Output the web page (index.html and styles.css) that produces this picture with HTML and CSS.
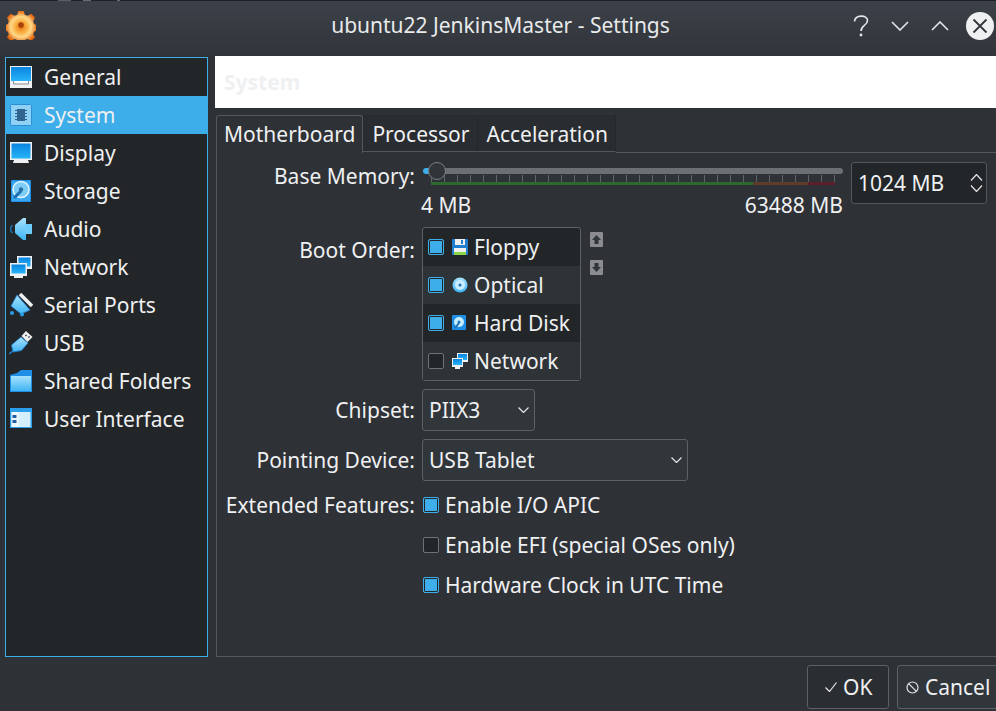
FILE: index.html
```html
<!DOCTYPE html>
<html lang="en">
<head>
    <meta charset="UTF-8">
    <meta name="viewport" content="width=device-width, initial-scale=1.0">
    <title>ubuntu22 JenkinsMaster - Settings</title>
    <link rel="stylesheet" href="styles.css">
</head>
<body>
    <svg class="defs" width="0" height="0">
        <defs>
            <linearGradient id="screen" x1="0" y1="0" x2="0" y2="1">
                <stop offset="0" stop-color="#0a84e0"/>
                <stop offset="1" stop-color="#27b4f8"/>
            </linearGradient>
            <linearGradient id="light" x1="0" y1="0" x2="0" y2="1">
                <stop offset="0" stop-color="#a8e2fd"/>
                <stop offset="1" stop-color="#3fb4f4"/>
            </linearGradient>
            <radialGradient id="gear" cx="0.5" cy="0.5" r="0.5">
                <stop offset="0" stop-color="#e8720c"/>
                <stop offset="0.4" stop-color="#fbb54a"/>
                <stop offset="0.65" stop-color="#fdd98a"/>
                <stop offset="1" stop-color="#e2650e"/>
            </radialGradient>
        </defs>
    </svg>

    <header class="titlebar">
        <svg class="app-icon" width="30" height="30" viewBox="0 0 32 32">
            <path fill="url(#gear)" d="M13 1h6l1 4 3 1 4-2 4 4-2 4 1 3 3 1v6l-3 1-1 3 2 3-4 4-4-2-3 1-1 3h-6l-1-3-3-1-4 2-4-4 2-3-1-3-3-1v-6l3-1 1-3-2-4 4-4 4 2 3-1z"/>
            <circle cx="16" cy="16" r="3" fill="#a8400c"/>
        </svg>
        <div class="title">ubuntu22 JenkinsMaster - Settings</div>
        <div class="win-buttons">
            <svg width="16" height="22" viewBox="0 0 16 22"><path class="win-stroke" d="M1.500 6.500C2 -0.500 14.500 -0.500 14.500 5.500c0 5-6.500 5-6.500 10.500"/><circle cx="8" cy="20" r="1.400" fill="#e4e6e8"/></svg>
            <svg width="18" height="10" viewBox="0 0 18 10"><path class="win-stroke" d="M1 1l8 8 8-8"/></svg>
            <svg width="18" height="10" viewBox="0 0 18 10"><path class="win-stroke" d="M1 9l8-8 8 8"/></svg>
            <svg class="win-close" width="28" height="28" viewBox="0 0 28 28"><circle cx="14" cy="14" r="14" fill="#eff0f1"/><path d="M7.500 7.500l13 13M20.500 7.500l-13 13" stroke="#31363b" stroke-width="1.800" fill="none"/></svg>
        </div>
    </header>

    <div class="main">
        <nav class="sidebar">
            <div class="nav-item">
                <svg width="24" height="24" viewBox="0 0 24 24"><rect x="1" y="1" width="22" height="22" fill="#eff0f1"/><rect x="2" y="2" width="20" height="14" fill="url(#screen)"/><path d="M5 16h14v3H5z" fill="#f7f7f7"/><path d="M4.500 16v3h15v-3" stroke="#8a8d90" fill="none"/></svg>
                General
            </div>
            <div class="nav-item selected">
                <svg width="24" height="24" viewBox="0 0 24 24"><rect x="1.500" y="1.500" width="21" height="21" rx="1" fill="#8fd0f5" stroke="#2a8ed8"/><rect x="8" y="6" width="8" height="12" fill="#31658f"/><path d="M6 7.500h12M6 10.500h12M6 13.500h12M6 16.500h12" stroke="#31658f" stroke-dasharray="2 8"/></svg>
                System
            </div>
            <div class="nav-item">
                <svg width="24" height="24" viewBox="0 0 24 24"><rect x="1" y="1" width="22" height="18" fill="#eff0f1"/><rect x="2.500" y="2.500" width="19" height="15" fill="url(#screen)"/><path d="M5 19h14l1 3H4z" fill="#eff0f1"/></svg>
                Display
            </div>
            <div class="nav-item">
                <svg width="24" height="24" viewBox="0 0 24 24"><rect x="2" y="1" width="20" height="22" rx="1" fill="#1f8ee6"/><rect x="3" y="2" width="18" height="20" fill="#39a6f0"/><circle cx="12" cy="10.500" r="8" fill="#7ccdf8" stroke="#e4f6fe" stroke-width="1.500"/><circle cx="12" cy="10.500" r="2.200" fill="#2a6ea8"/><path d="M12 12l-7 7" stroke="#1f6fb0" stroke-width="3"/></svg>
                Storage
            </div>
            <div class="nav-item">
                <svg width="24" height="24" viewBox="0 0 24 24"><path d="M6 8l8-7h3v22h-3l-8-7z" fill="url(#light)"/><rect x="16" y="7" width="7" height="10" fill="#6fcbfa"/><path d="M3.500 8c-2.500 2-2.500 6 0 8" stroke="#1f6fb0" fill="none" stroke-width="1.500"/></svg>
                Audio
            </div>
            <div class="nav-item">
                <svg width="24" height="24" viewBox="0 0 24 24"><rect x="8" y="1" width="15" height="13" fill="#eff0f1"/><rect x="9.500" y="2.500" width="12" height="9" fill="url(#screen)"/><rect x="1" y="8" width="17" height="13" fill="#eff0f1"/><rect x="2.500" y="9.500" width="14" height="9" fill="url(#screen)"/><path d="M5 21h9v2H5z" fill="#eff0f1"/></svg>
                Network
            </div>
            <div class="nav-item">
                <svg width="24" height="24" viewBox="0 0 24 24"><path d="M8 2l13 15-9 4-10-8z" fill="url(#light)" stroke="#1f7ed0" stroke-width=".8"/><path d="M11 1l12 12" stroke="#eff0f1" stroke-width="3.500"/><circle cx="3" cy="20" r="2" fill="#2a9ee8"/><circle cx="13" cy="21.500" r="2" fill="#2a9ee8"/></svg>
                Serial Ports
            </div>
            <div class="nav-item">
                <svg width="24" height="24" viewBox="0 0 24 24"><path d="M12 6l7 6-6.500 7.500-8.500 1.500-1.500-7z" fill="url(#light)" stroke="#1f7ed0" stroke-width=".8"/><path d="M4 20l-4 3" stroke="#1f7ed0" stroke-width="1.500"/><path d="M17 0l6.500 6-5 5-6-6z" fill="#eff0f1"/><path d="M16.500 4l1 1M19.500 5.500l1 1" stroke="#31363b" stroke-width="1.500"/></svg>
                USB
            </div>
            <div class="nav-item">
                <svg width="24" height="24" viewBox="0 0 24 24"><path d="M1 6l7-2 4-3h11v22H1z" fill="#1f8ee6"/><path d="M2 7h20v15H2z" fill="url(#light)"/></svg>
                Shared Folders
            </div>
            <div class="nav-item">
                <svg width="24" height="24" viewBox="0 0 24 24"><rect x="1" y="1" width="22" height="20" fill="#2a9ee8"/><rect x="2.500" y="5" width="19" height="15" fill="#d4f0fd"/><rect x="2.500" y="5" width="7" height="15" fill="#f2f8fc"/><path d="M3.500 8h4v3h-4zM3.500 13h4v3h-4z" fill="#1f5fa8"/></svg>
                User Interface
            </div>
        </nav>

        <section class="content">
            <h2 class="page-title">System</h2>
            <div class="tabs">
                <div class="tab active">Motherboard</div>
                <div class="tab">Processor</div>
                <div class="tab">Acceleration</div>
            </div>
            <div class="panel">
                <div class="row row-memory">
                    <div class="label">Base Memory:</div>
                    <div class="slider">
                        <div class="track">
                            <span class="track-fill"></span>
                            <span class="handle"></span>
                        </div>
                        <div class="ticks"></div>
                        <div class="scale"></div>
                        <div class="slider-labels"><span>4 MB</span><span>63488 MB</span></div>
                    </div>
                    <div class="spinbox">
                        1024 MB
                        <svg width="13" height="18" viewBox="0 0 13 18"><path class="chev" d="M1 6.500l5.500-6 5.500 6M1 11.500l5.500 6 5.500-6"/></svg>
                    </div>
                </div>

                <div class="row row-boot">
                    <div class="label">Boot Order:</div>
                    <div class="boot-list">
                        <div class="boot-item">
                            <span class="check on"></span>
                            <svg width="16" height="16" viewBox="0 0 16 16"><rect width="16" height="16" rx="1" fill="#1f7ed0"/><rect x="3" y="0" width="10" height="6" fill="#eff0f1"/><rect x="9" y="1" width="2" height="4" fill="#1f7ed0"/><rect x="2" y="9" width="12" height="7" fill="#eff0f1"/><rect x="2" y="13" width="12" height="3" fill="#8bd44a"/></svg>
                            Floppy
                        </div>
                        <div class="boot-item alt">
                            <span class="check on"></span>
                            <svg width="16" height="16" viewBox="0 0 16 16"><circle cx="8" cy="8" r="7.500" fill="url(#light)"/><circle cx="8" cy="8" r="5" fill="#c8eefd"/><circle cx="8" cy="8" r="1.500" fill="#1f6fb0"/></svg>
                            Optical
                        </div>
                        <div class="boot-item">
                            <span class="check on"></span>
                            <svg width="16" height="16" viewBox="0 0 16 16"><rect width="14" height="15" rx="1" fill="#1f8ee6"/><circle cx="7" cy="7" r="5" fill="#c8eefd"/><circle cx="7" cy="7" r="1.500" fill="#2178bc"/><path d="M7 8l-4 5" stroke="#1f6fb0" stroke-width="2"/></svg>
                            Hard Disk
                        </div>
                        <div class="boot-item alt">
                            <span class="check"></span>
                            <svg width="16" height="16" viewBox="0 0 16 16"><rect x="5" y="0" width="11" height="9" fill="#eff0f1"/><rect x="6" y="1" width="9" height="6" fill="url(#screen)"/><rect x="0" y="5" width="11" height="9" fill="#eff0f1"/><rect x="1" y="6" width="9" height="6" fill="url(#screen)"/><path d="M3 14h5v2H3z" fill="#eff0f1"/></svg>
                            Network
                        </div>
                    </div>
                    <div class="order-buttons">
                        <span class="order-btn"><svg width="9" height="9" viewBox="0 0 9 9"><path d="M4.500 0L9 5H6.500v4h-4V5H0z" fill="#31363b"/></svg></span>
                        <span class="order-btn"><svg width="9" height="9" viewBox="0 0 9 9"><path d="M4.500 9L9 4H6.500V0h-4v4H0z" fill="#31363b"/></svg></span>
                    </div>
                </div>

                <div class="row row-combo">
                    <div class="label">Chipset:</div>
                    <div class="combo combo-small">PIIX3<svg width="11" height="6" viewBox="0 0 11 6"><path class="chev" d="M.5.500l5 5 5-5"/></svg></div>
                </div>
                <div class="row row-combo">
                    <div class="label">Pointing Device:</div>
                    <div class="combo combo-wide">USB Tablet<svg width="11" height="6" viewBox="0 0 11 6"><path class="chev" d="M.5.500l5 5 5-5"/></svg></div>
                </div>

                <div class="row row-feature">
                    <div class="label">Extended Features:</div>
                    <div class="feature"><span class="check on"></span>Enable I/O APIC</div>
                </div>
                <div class="row row-feature">
                    <div class="label"></div>
                    <div class="feature"><span class="check"></span>Enable EFI (special OSes only)</div>
                </div>
                <div class="row row-feature">
                    <div class="label"></div>
                    <div class="feature"><span class="check on"></span>Hardware Clock in UTC Time</div>
                </div>
            </div>
        </section>
    </div>

    <footer class="footer">
        <div class="btn default"><svg width="12" height="10" viewBox="0 0 12 10"><path class="chev" d="M.5 5.500l4 4 7-9"/></svg>OK</div>
        <div class="btn"><svg width="13" height="13" viewBox="0 0 13 13"><circle cx="6.500" cy="6.500" r="5.500" class="chev"/><path class="chev" d="M2.600 2.600l7.800 7.800"/></svg>Cancel</div>
    </footer>
</body>
</html>
```

FILE: styles.css
```css
* {
    box-sizing: border-box;
}

html, body {
    height: 100%;
}

body {
    margin: 0;
    width: 996px;
    height: 711px;
    overflow: hidden;
    display: flex;
    flex-direction: column;
    font-family: "Noto Sans", sans-serif;
    font-size: 21px;
    line-height: 28px;
    color: #eff0f1;
    background-color: #2e3136;
}

.defs {
    display: block;
    height: 0;
}

.chev, .win-stroke {
    fill: none;
    stroke: #e4e6e8;
    stroke-width: 1.2;
}

.win-stroke {
    stroke-width: 1.6;
}

/* title bar */
.titlebar {
    height: 56px;
    flex: none;
    display: flex;
    align-items: center;
    padding: 0 2px 8px 6px;
    border-top: 1px solid #1f2124;
    border-image: linear-gradient(90deg, #1f2124 59px, #5a6068 59px 72px, #1f2124 72px 84px, #6a6d70 84px 92px, #1f2124 92px 118px, #6a6d70 118px 121px, #1f2124 121px) 1;
    background: linear-gradient(#3c4048, #31353a);
}

.app-icon {
    flex: none;
}

.title {
    flex: 1;
    padding-left: 112px;
    text-align: center;
    color: #e8eaec;
}

.win-buttons {
    display: flex;
    align-items: center;
    gap: 22px;
    padding-top: 2px;
}

.win-close {
    margin-left: -5px;
}

/* layout */
.main {
    flex: 1;
    min-height: 0;
    display: flex;
    padding-left: 5px;
    gap: 7px;
}

.sidebar {
    width: 203px;
    margin-top: 1px;
    height: 600px;
    flex: none;
    border: 1px solid #3daee9;
    background-color: #232629;
}

.nav-item {
    height: 38px;
    display: flex;
    align-items: center;
    gap: 11px;
    padding-left: 3px;
}

.nav-item.selected {
    background-color: #3daee9;
}

.content {
    flex: 1;
    min-width: 0;
    display: flex;
    flex-direction: column;
}

.page-title {
    height: 52px;
    margin: 0;
    padding: 0 0 0 9px;
    background-color: #fff;
    color: #eff0f1;
    font-size: 21px;
    font-weight: 700;
    line-height: 52px;
}

/* tabs */
.tabs {
    display: flex;
    margin: 7px 0 0 1px;
    position: relative;
    z-index: 1;
}

.tab {
    height: 37px;
    padding: 5px 7px 0 9px;
    background-color: #292c30;
    border-bottom: 1px solid #54585c;
    border-right: 1px solid #26292c;
}

.tab.active {
    height: 38px;
    margin-bottom: -1px;
    background-color: #2e3136;
    border: 1px solid #54585c;
    border-bottom: none;
    border-radius: 3px 3px 0 0;
    padding: 4px 7px 0;
}

.tabs::after {
    content: "";
    flex: 1;
    border-bottom: 1px solid #54585c;
    height: 37px;
}

.panel {
    height: 505px;
    margin-left: 1px;
    border-left: 1px solid #54585c;
    border-bottom: 1px solid #54585c;
}

.row {
    display: flex;
    align-items: center;
}

.label {
    width: 198px;
    flex: none;
    margin-right: 7px;
    text-align: right;
}

/* base memory */
.row-memory {
    align-items: flex-start;
    height: 74px;
    padding-top: 9px;
}

.slider {
    width: 421px;
    flex: none;
    padding-top: 6px;
}

.track {
    height: 6px;
    margin-left: 8px;
    border-radius: 3px;
    background-color: #6c6f73;
    position: relative;
}

.track-fill {
    position: absolute;
    left: -7px;
    top: 0;
    width: 11px;
    height: 6px;
    border-radius: 3px;
    background-color: #3daee9;
}

.handle {
    position: absolute;
    left: -2px;
    top: -6px;
    width: 18px;
    height: 18px;
    border-radius: 50%;
    border: 1px solid #7c7f83;
    background-color: #31353a;
}

.ticks {
    height: 7px;
    margin: 1px 8px 0 9px;
    background: repeating-linear-gradient(90deg, #5f6266 0 1px, transparent 1px 13px);
}

.scale {
    height: 3px;
    margin: 0 8px 0 9px;
    background: linear-gradient(90deg, #2a6a2e 0 322px, #5f3b2a 322px 377px, #5f1f28 377px);
}

.slider-labels {
    display: flex;
    justify-content: space-between;
    margin: 6px 0 0 -1px;
}

.spinbox {
    width: 136px;
    height: 42px;
    margin: 0 0 0 8px;
    display: flex;
    align-items: center;
    justify-content: space-between;
    padding: 0 3px 0 6px;
    border: 1px solid #54585c;
    border-radius: 3px;
    background-color: #232629;
}

/* boot order */
.row-boot {
    align-items: flex-start;
    height: 158px;
}

.row-boot .label {
    padding-top: 9px;
}

.boot-list {
    width: 159px;
    height: 154px;
    flex: none;
    border: 1px solid #5d6165;
    border-radius: 3px;
    background-color: #232629;
}

.boot-item {
    height: 38px;
    display: flex;
    align-items: center;
    gap: 6px;
    padding-left: 5px;
}

.boot-item .check {
    margin-right: 2px;
}

.boot-item.alt {
    background-color: #2e3338;
}

.check {
    width: 16px;
    height: 16px;
    flex: none;
    border: 1px solid #6f7276;
    border-radius: 2px;
    background-color: #232629;
}

.check.on {
    border-color: #3daee9;
    background-color: #3daee9;
    box-shadow: inset 0 0 0 1px #232629;
}

.order-buttons {
    display: flex;
    flex-direction: column;
    gap: 13px;
    margin: 5px 0 0 9px;
}

.order-btn {
    width: 13px;
    height: 15px;
    display: flex;
    align-items: center;
    justify-content: center;
    background-color: #8a8c8f;
    border-radius: 1px;
}

/* combos */
.row-combo {
    height: 50px;
}

.combo {
    height: 42px;
    display: flex;
    align-items: center;
    justify-content: space-between;
    padding: 0 5px 0 6px;
    border: 1px solid #5d6165;
    border-radius: 3px;
    background-color: #31363b;
}

.combo-small {
    width: 113px;
}

.combo-wide {
    width: 266px;
}

/* extended features */
.row-feature {
    height: 40px;
}

.feature {
    display: flex;
    align-items: center;
    gap: 6px;
    padding-left: 1px;
}

/* dialog buttons */
.footer {
    height: 54px;
    flex: none;
    display: flex;
    justify-content: flex-end;
    gap: 8px;
    padding-top: 8px;
    margin-right: -6px;
}

.btn {
    height: 44px;
    display: flex;
    align-items: center;
    gap: 6px;
    border: 1px solid #5d6165;
    border-radius: 3px;
    background-color: #31363b;
}

.btn.default {
    width: 82px;
    padding-left: 17px;
    background-color: #2a2d31;
}

.btn:last-child {
    width: 105px;
    padding-left: 8px;
}
```
